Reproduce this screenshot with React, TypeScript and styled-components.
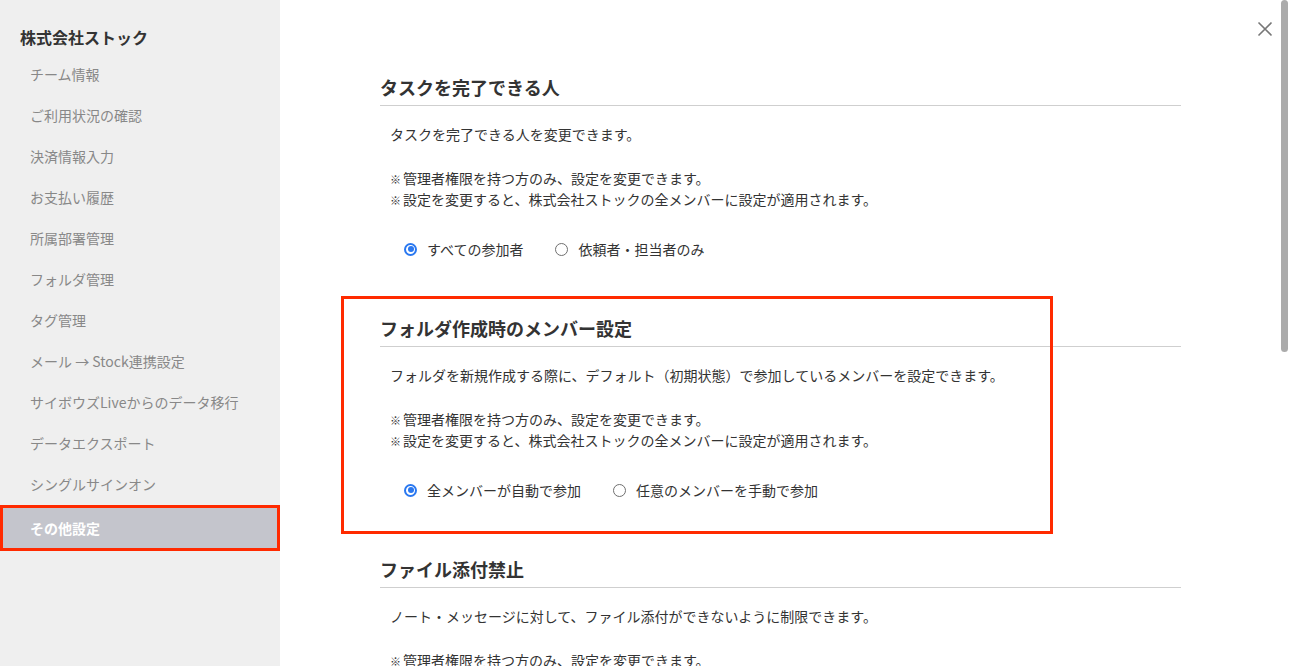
import styled, { createGlobalStyle } from 'styled-components'

const GlobalStyle = createGlobalStyle`
  html, body {
    margin: 0;
    padding: 0;
    height: 100%;
    overflow: hidden;
  }
  body {
    font-family: "Noto Sans CJK JP", "Noto Sans", sans-serif;
    color: #333;
    background: #fff;
  }
`

const Layout = styled.div`
  display: flex;
  width: 1290px;
  height: 666px;
  overflow: hidden;
`

const Sidebar = styled.nav`
  width: 280px;
  flex-shrink: 0;
  background: #efefef;
  padding-top: 25px;
  box-sizing: border-box;
`

const TeamName = styled.div`
  padding-left: 20px;
  font-size: 16px;
  font-weight: 700;
  line-height: 24px;
  color: #333;
  margin-bottom: 4px;
`

const NavItem = styled.div<{ $active?: boolean }>`
  height: 41px;
  display: flex;
  align-items: center;
  padding-left: 30px;
  font-size: 14px;
  color: #888;
  box-sizing: border-box;

  ${(p) =>
    p.$active &&
    `
    height: 46px;
    margin-top: 1px;
    padding-left: 27px;
    background: #c4c5cc;
    color: #fff;
    font-weight: 700;
    border: 3px solid #ff2a00;
  `}
`

const Main = styled.main`
  position: relative;
  flex: 1;
  height: 100%;
  background: #fff;
  padding: 75px 109px 0 100px;
  box-sizing: border-box;
`

const CloseButton = styled.button`
  position: absolute;
  top: 21px;
  right: 17px;
  width: 16px;
  height: 16px;
  padding: 0;
  border: none;
  background: none;
  cursor: pointer;
  display: flex;
`

const ScrollThumb = styled.div`
  position: absolute;
  top: 0;
  right: 2px;
  width: 7px;
  height: 352px;
  border-radius: 4px;
  background: #ababab;
`

const Section = styled.section`
  position: relative;
  margin-bottom: 57px;
`

const Highlight = styled.div`
  position: absolute;
  left: -39px;
  top: -20px;
  width: 712px;
  height: 238px;
  border: 3px solid #ff2a00;
  box-sizing: border-box;
  pointer-events: none;
`

const Heading = styled.h2`
  margin: 0;
  font-size: 18px;
  font-weight: 700;
  line-height: 24px;
  color: #333;
  padding-bottom: 6px;
  border-bottom: 1px solid #cfcfcf;
`

const Body = styled.div`
  padding-left: 10px;
  font-size: 14px;
  line-height: 20px;
  color: #333;
`

const Description = styled.p`
  margin: 18px 0 0;
`

const Notes = styled.div`
  margin-top: 24px;
`

const Note = styled.div`
  display: flex;
  align-items: baseline;
`

const Mark = styled.span`
  font-size: 11px;
  width: 12px;
  margin-right: 1px;
`

const RadioGroup = styled.div`
  display: flex;
  align-items: center;
  gap: 32px;
  margin-top: 29px;
  padding-left: 14px;
`

const RadioLabel = styled.label`
  display: flex;
  align-items: center;
  gap: 10px;
  font-size: 14px;
  line-height: 20px;
`

const RadioCircle = styled.span<{ $checked?: boolean }>`
  width: 13px;
  height: 13px;
  border-radius: 50%;
  box-sizing: border-box;
  display: flex;
  align-items: center;
  justify-content: center;
  border: ${(p) => (p.$checked ? '2px solid #2a78f0' : '1px solid #6f6f6f')};
  background: #fff;

  &::after {
    content: '';
    display: ${(p) => (p.$checked ? 'block' : 'none')};
    width: 6px;
    height: 6px;
    border-radius: 50%;
    background: #2a78f0;
  }
`

const navItems = [
  'チーム情報',
  'ご利用状況の確認',
  '決済情報入力',
  'お支払い履歴',
  '所属部署管理',
  'フォルダ管理',
  'タグ管理',
  'メール → Stock連携設定',
  'サイボウズLiveからのデータ移行',
  'データエクスポート',
  'シングルサインオン',
  'その他設定',
]

const adminNotes = [
  '管理者権限を持つ方のみ、設定を変更できます。',
  '設定を変更すると、株式会社ストックの全メンバーに設定が適用されます。',
]

interface SettingProps {
  title: string
  description: string
  options?: string[]
  highlighted?: boolean
}

function Setting({ title, description, options, highlighted }: SettingProps) {
  return (
    <Section>
      {highlighted && <Highlight />}
      <Heading>{title}</Heading>
      <Body>
        <Description>{description}</Description>
        <Notes>
          {adminNotes.map((n) => (
            <Note key={n}>
              <Mark>※</Mark>
              {n}
            </Note>
          ))}
        </Notes>
        {options && (
          <RadioGroup>
            {options.map((o, i) => (
              <RadioLabel key={o}>
                <RadioCircle $checked={i === 0} />
                {o}
              </RadioLabel>
            ))}
          </RadioGroup>
        )}
      </Body>
    </Section>
  )
}

export default function App() {
  return (
    <>
      <GlobalStyle />
      <Layout>
        <Sidebar>
          <TeamName>株式会社ストック</TeamName>
          {navItems.map((item) => (
            <NavItem key={item} $active={item === 'その他設定'}>
              {item}
            </NavItem>
          ))}
        </Sidebar>
        <Main>
          <CloseButton aria-label="閉じる">
            <svg width="16" height="16" viewBox="0 0 16 16">
              <path d="M1.5 1.5 L14.5 14.5 M14.5 1.5 L1.5 14.5" stroke="#777" strokeWidth="1.6" />
            </svg>
          </CloseButton>
          <ScrollThumb />
          <Setting
            title="タスクを完了できる人"
            description="タスクを完了できる人を変更できます。"
            options={['すべての参加者', '依頼者・担当者のみ']}
          />
          <Setting
            highlighted
            title="フォルダ作成時のメンバー設定"
            description="フォルダを新規作成する際に、デフォルト（初期状態）で参加しているメンバーを設定できます。"
            options={['全メンバーが自動で参加', '任意のメンバーを手動で参加']}
          />
          <Setting
            title="ファイル添付禁止"
            description="ノート・メッセージに対して、ファイル添付ができないように制限できます。"
          />
        </Main>
      </Layout>
    </>
  )
}
